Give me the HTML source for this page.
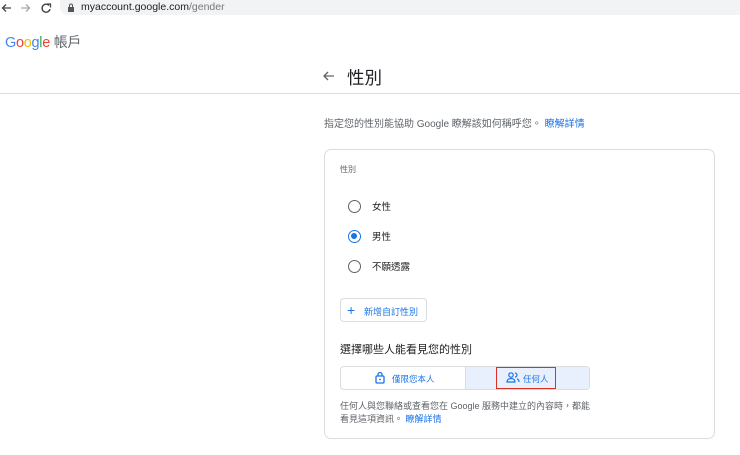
<!DOCTYPE html>
<html><head><meta charset="utf-8"><style>
*{box-sizing:border-box;margin:0;padding:0}
body{width:740px;height:455px;background:#fff;font-family:"Liberation Sans","Noto Sans CJK TC",sans-serif;color:#3c4043;position:relative;overflow:hidden}
.a{position:absolute;white-space:nowrap}
</style></head><body>
<svg class="a" style="left:0;top:0" width="60" height="16" viewBox="0 0 60 16">
<path d="M11 8H3M6 4.5L2.5 8 6 11.5" stroke="#444" stroke-width="1.3" fill="none"/>
<path d="M21 8h8M26 4.5L29.5 8 26 11.5" stroke="#aaa" stroke-width="1.3" fill="none"/>
<path d="M49 5.5A4 4 0 1 0 50 9" stroke="#444" stroke-width="1.4" fill="none"/><path d="M47 4h3.5v3.5" stroke="#444" stroke-width="1.3" fill="none"/>
</svg>
<div class="a" style="left:60px;top:0;width:680px;height:15px;background:#f1f3f4;border-radius:0 0 0 8px"></div>
<svg class="a" style="left:67px;top:3px" width="8" height="9"><rect x="1" y="4" width="6" height="5" fill="#555"/><path d="M2.5 4V2.5a1.5 1.5 0 0 1 3 0V4" stroke="#555" fill="none"/></svg>
<div class="a" style="left:81px;top:1px;font-size:10.5px;color:#202124">myaccount.google.com<span style="color:#777">/gender</span></div>
<div class="a" style="left:5px;top:32px;font-size:14.5px;letter-spacing:-0.3px"><span style="color:#4285f4">G</span><span style="color:#ea4335">o</span><span style="color:#fbbc05">o</span><span style="color:#4285f4">g</span><span style="color:#34a853">l</span><span style="color:#ea4335">e</span> <span style="color:#5f6368;font-size:14px">帳戶</span></div>
<div class="a" style="left:0;top:93px;width:740px;height:1px;background:#dadce0"></div>
<svg class="a" style="left:322px;top:70px" width="14" height="12"><path d="M12 6H2M6 2L2 6l4 4" stroke="#5f6368" stroke-width="1.3" fill="none"/></svg>
<div class="a" style="left:347px;top:65px;font-size:17.5px;color:#202124">性別</div>
<div class="a" style="left:324px;top:115px;font-size:10px;color:#5f6368">指定您的性別能協助 Google 瞭解該如何稱呼您。 <span style="color:#1a73e8">瞭解詳情</span></div>
<div class="a" style="left:324px;top:149px;width:391px;height:290px;border:1px solid #dadce0;border-radius:7px"></div>
<div class="a" style="left:340px;top:164px;font-size:8px;color:#5f6368">性別</div>
<div class="a" style="left:348px;top:200px;width:13px;height:13px;border:1.5px solid #5f6368;border-radius:50%"></div>
<div class="a" style="left:372px;top:199px;font-size:9.5px;color:#202124">女性</div>
<div class="a" style="left:348px;top:230px;width:13px;height:13px;border:1.5px solid #1a73e8;border-radius:50%"><div style="margin:2px;width:6px;height:6px;border-radius:50%;background:#1a73e8"></div></div>
<div class="a" style="left:372px;top:229px;font-size:9.5px;color:#202124">男性</div>
<div class="a" style="left:348px;top:260px;width:13px;height:13px;border:1.5px solid #5f6368;border-radius:50%"></div>
<div class="a" style="left:372px;top:259px;font-size:9.5px;color:#202124">不願透露</div>
<div class="a" style="left:340px;top:298px;width:87px;height:24px;border:1px solid #dadce0;border-radius:4px;font-size:9px;color:#1a73e8;padding:6px 0 0 23px">新增自訂性別</div>
<div class="a" style="left:347px;top:305px;font-size:14px;color:#1a73e8;line-height:10px">+</div>
<div class="a" style="left:340px;top:341px;font-size:11px;color:#202124">選擇哪些人能看見您的性別</div>
<div class="a" style="left:340px;top:366px;width:250px;height:24px;border:1px solid #dadce0;border-radius:4px;overflow:hidden">
<div style="position:absolute;left:124px;top:0;width:126px;height:24px;background:#e8f0fe;border-left:1px solid #dadce0"></div></div>
<svg class="a" style="left:375px;top:371px" width="10" height="13"><rect x="1" y="5" width="8" height="7" rx="1" fill="none" stroke="#1a73e8" stroke-width="1.3"/><path d="M3 5V3.5a2 2 0 0 1 4 0V5" stroke="#1a73e8" stroke-width="1.3" fill="none"/><circle cx="5" cy="8.5" r="0.9" fill="#1a73e8"/></svg>
<div class="a" style="left:392px;top:373px;font-size:8.5px;color:#1a73e8">僅限您本人</div>
<div class="a" style="left:496px;top:367px;width:60px;height:22px;border:1.5px solid #d93025"></div>
<svg class="a" style="left:506px;top:372px" width="14" height="11"><circle cx="5" cy="3" r="2.2" fill="none" stroke="#1a73e8" stroke-width="1.2"/><path d="M1 10c0-2.5 2-3.5 4-3.5s4 1 4 3.5z" fill="none" stroke="#1a73e8" stroke-width="1.2"/><path d="M9 1a2 2 0 0 1 0 4M11 6.8c1.3.5 2 1.5 2 3.2" fill="none" stroke="#1a73e8" stroke-width="1.2"/></svg>
<div class="a" style="left:523px;top:373px;font-size:8.5px;color:#1a73e8">任何人</div>
<div class="a" style="left:340px;top:400px;font-size:9px;color:#5f6368;line-height:13px">任何人與您聯絡或查看您在 Google 服務中建立的內容時，都能<br>看見這項資訊。 <span style="color:#1a73e8">瞭解詳情</span></div>
</body></html>
